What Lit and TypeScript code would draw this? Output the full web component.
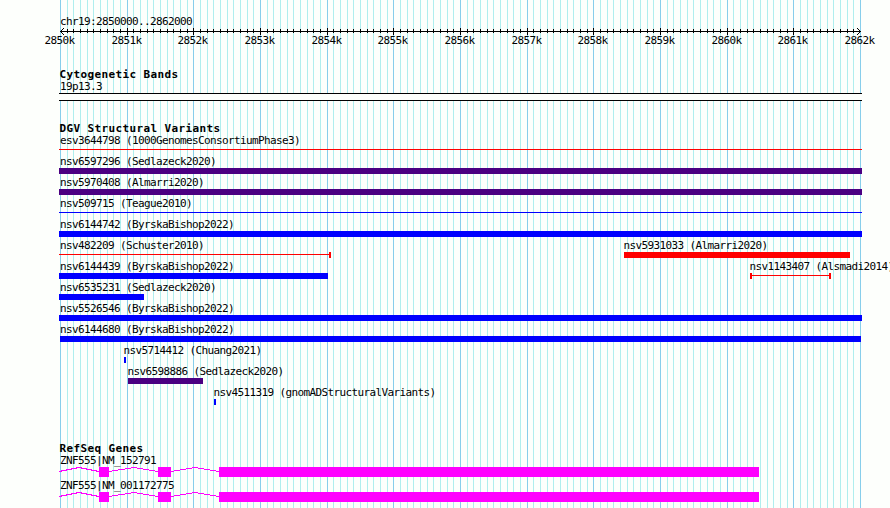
import { LitElement, css, html, svg } from 'lit'
import { customElement, property } from 'lit/decorators.js'

interface Feature {
  label: string
  start: number
  end: number
  color: string
  /** 'bar' is a thick box, 'line' a thin span with optional end caps */
  shape: 'bar' | 'line'
  caps?: number[]
}

interface Gene {
  label: string
  exons: [number, number][]
}

const WIDTH = 890
const ORIGIN = 60
const TICKS = 120
const STEP = 800 / TICKS

const INDIGO = '#4b0082'
const BLUE = '#0000ff'
const RED = '#ff0000'

const tickX = (i: number): number => Math.round(ORIGIN + i * STEP)
const ticks = Array.from({ length: TICKS + 1 }, (_, i) => i)

const full = (label: string, color: string, shape: 'bar' | 'line' = 'bar'): Feature => ({
  label,
  start: 59,
  end: 862,
  color,
  shape,
})

const variants: Feature[][] = [
  [full('esv3644798 (1000GenomesConsortiumPhase3)', RED, 'line')],
  [full('nsv6597296 (Sedlazeck2020)', INDIGO)],
  [full('nsv5970408 (Almarri2020)', INDIGO)],
  [full('nsv509715 (Teague2010)', BLUE, 'line')],
  [full('nsv6144742 (ByrskaBishop2022)', BLUE)],
  [
    { label: 'nsv482209 (Schuster2010)', start: 59, end: 331, color: RED, shape: 'line', caps: [329] },
    { label: 'nsv5931033 (Almarri2020)', start: 624, end: 850, color: RED, shape: 'bar' },
  ],
  [
    { label: 'nsv6144439 (ByrskaBishop2022)', start: 59, end: 328, color: BLUE, shape: 'bar' },
    { label: 'nsv1143407 (Alsmadi2014)', start: 750, end: 831, color: RED, shape: 'line', caps: [750, 829] },
  ],
  [{ label: 'nsv6535231 (Sedlazeck2020)', start: 59, end: 144, color: BLUE, shape: 'bar' }],
  [full('nsv5526546 (ByrskaBishop2022)', BLUE)],
  [{ label: 'nsv6144680 (ByrskaBishop2022)', start: 60, end: 861, color: BLUE, shape: 'bar' }],
  [{ label: 'nsv5714412 (Chuang2021)', start: 124, end: 126, color: BLUE, shape: 'bar' }],
  [{ label: 'nsv6598886 (Sedlazeck2020)', start: 128, end: 203, color: INDIGO, shape: 'bar' }],
  [{ label: 'nsv4511319 (gnomADStructuralVariants)', start: 214, end: 216, color: BLUE, shape: 'bar' }],
]

const exons: [number, number][] = [
  [99, 109],
  [158, 171],
  [219, 759],
]

const genes: Gene[] = [
  { label: 'ZNF555|NM_152791', exons },
  { label: 'ZNF555|NM_001172775', exons },
]

const trackStyles = css`
  :host {
    display: block;
  }

  svg {
    display: block;
    overflow: hidden;
    shape-rendering: crispEdges;
  }

  .label {
    font: 11px 'DejaVu Sans Mono', monospace;
    letter-spacing: -0.622px;
    fill: #000;
    white-space: pre;
  }

  .title {
    height: 11px;
    padding-left: 59.5px;
    font: bold 11px/13px 'DejaVu Sans Mono', monospace;
    letter-spacing: 0.378px;
    color: #000;
    white-space: pre;
  }
`

@customElement('gb-ruler')
export class GbRuler extends LitElement {
  render() {
    return html`
      <svg width=${WIDTH} height="48">
        <text class="label" x="60" y="25">chr19:2850000..2862000</text>
        <rect x="60" y="31" width="801" height="1"></rect>
        ${ticks.map((i) => {
          const major = i % 10 === 0
          if (i === 0 || i === TICKS) return null
          return svg`<rect x=${tickX(i)} y=${major ? 28 : 29} width="1" height=${major ? 7 : 4}></rect>`
        })}
        <path
          d="M60 31h1v1h-1zM61 30h1v1h-1zM62 29h1v1h-1zM63 28h1v1h-1zM61 32h1v1h-1zM62 33h1v1h-1zM63 34h1v1h-1z"
        ></path>
        <path
          d="M860 31h1v1h-1zM859 30h1v1h-1zM858 29h1v1h-1zM857 28h1v1h-1zM859 32h1v1h-1zM858 33h1v1h-1zM857 34h1v1h-1z"
        ></path>
        ${ticks
          .filter((i) => i % 10 === 0)
          .map((i) => svg`<text class="label" x=${tickX(i) - 15.5} y="44">${2850 + i / 10}k</text>`)}
      </svg>
    `
  }

  static styles = trackStyles
}

@customElement('gb-cytoband')
export class GbCytoband extends LitElement {
  render() {
    return html`
      <div class="title">Cytogenetic Bands</div>
      <svg class="band" width=${WIDTH} height="21">
        <text class="label" x="60" y="9">19p13.3</text>
        <rect x="59" y="12" width="803" height="8" fill="#000"></rect>
        <rect x="59" y="13" width="803" height="6" fill="#fdfffc"></rect>
      </svg>
    `
  }

  static styles = [
    trackStyles,
    css`
      .band {
        margin-top: 2px;
      }
    `,
  ]
}

@customElement('gb-variants')
export class GbVariants extends LitElement {
  @property({ attribute: false }) rows: Feature[][] = []

  private _feature(f: Feature) {
    const width = f.end - f.start
    const body =
      f.shape === 'bar'
        ? svg`<rect x=${f.start} y="14" width=${width} height="6" fill=${f.color}></rect>`
        : svg`<rect x=${f.start} y="16" width=${width} height="1" fill=${f.color}></rect>`
    return svg`
      <text class="label" x=${Math.max(f.start - 0.6, ORIGIN)} y="11">${f.label}</text>
      ${body}
      ${(f.caps ?? []).map((x) => svg`<rect x=${x} y="14" width="2" height="6" fill=${f.color}></rect>`)}
    `
  }

  render() {
    return html`
      <div class="title">DGV Structural Variants</div>
      ${this.rows.map((row) => html`<svg width=${WIDTH} height="21">${row.map((f) => this._feature(f))}</svg>`)}
    `
  }

  static styles = trackStyles
}

@customElement('gb-genes')
export class GbGenes extends LitElement {
  @property({ attribute: false }) genes: Gene[] = []

  /** Hat-shaped introns joining each exon to the one before it */
  private _introns(gene: Gene): string {
    let from = 59
    return gene.exons
      .map(([start, end]) => {
        const mid = Math.round((from + start) / 2)
        const d = `M${from} 18.5L${mid} 14.5L${start} 18.5`
        from = end
        return d
      })
      .join('')
  }

  render() {
    return html`
      <div class="title">RefSeq Genes</div>
      ${this.genes.map(
        (gene) => html`
          <svg width=${WIDTH} height="25">
            <text class="label" x="60" y="11">${gene.label}</text>
            <path d=${this._introns(gene)} fill="none" stroke="#ff00ff"></path>
            ${gene.exons.map(
              ([a, b]) => svg`<rect x=${a} y="14" width=${b - a} height="10" fill="#ff00ff"></rect>`,
            )}
          </svg>
        `,
      )}
    `
  }

  static styles = trackStyles
}

@customElement('app-root')
export class AppRoot extends LitElement {
  render() {
    return html`
      <div class="panel">
        <svg class="grid" width=${WIDTH} height="508">
          ${ticks.map(
            (i) => svg`<rect class=${i % 10 === 0 ? 'major' : 'minor'} x=${tickX(i)} width="1" height="508"></rect>`,
          )}
        </svg>
        <div class="tracks">
          <gb-ruler></gb-ruler>
          <gb-cytoband></gb-cytoband>
          <gb-variants .rows=${variants}></gb-variants>
          <gb-genes .genes=${genes}></gb-genes>
        </div>
      </div>
    `
  }

  static styles = css`
    :host {
      display: block;
    }

    .panel {
      display: grid;
      width: 890px;
      height: 508px;
      overflow: hidden;
      background: #fdfffc;
    }

    /* the grid lines sit behind the tracks in the same cell */
    .grid,
    .tracks {
      grid-area: 1 / 1;
    }

    .grid {
      display: block;
      shape-rendering: crispEdges;
    }

    .major {
      fill: #87ceeb;
    }

    .minor {
      fill: #afeeee;
    }

    .tracks {
      display: flex;
      flex-direction: column;
      height: 508px;
    }

    gb-cytoband {
      margin-top: 20px;
    }

    gb-variants {
      margin-top: 20px;
    }

    gb-genes {
      margin-top: 36px;
    }
  `
}
